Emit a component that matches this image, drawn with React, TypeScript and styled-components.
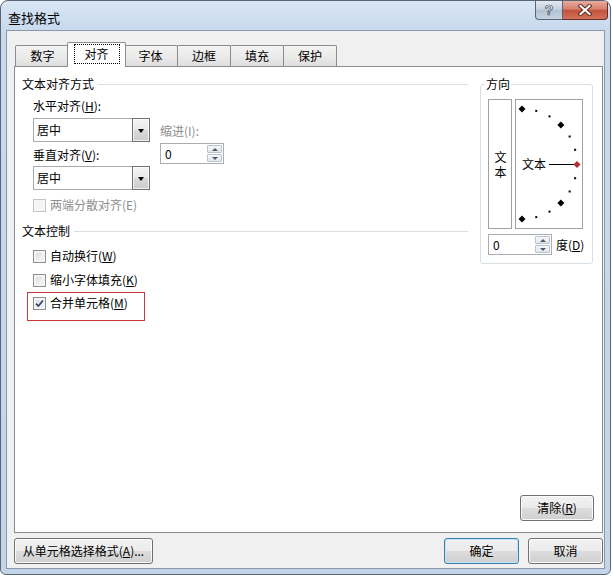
import React from 'react';
import styled, { createGlobalStyle } from 'styled-components';

const Global = createGlobalStyle`
  html, body { margin: 0; padding: 0; background: #ffffff; }
  body {
    font-family: "Noto Sans CJK SC", "Microsoft YaHei", sans-serif;
    font-size: 12px;
    color: #000;
  }
`;

const Window = styled.div`
  box-sizing: border-box;
  width: 611px;
  height: 575px;
  border: 1px solid #5a6573;
  border-radius: 8px 8px 6px 6px;
  background: linear-gradient(180deg, #d9e6f5 0px, #c9daee 28px, #c4d5e9 100%);
  display: flex;
  flex-direction: column;
  overflow: hidden;
`;

const TitleBar = styled.div`
  height: 29px;
  flex: none;
  display: flex;
  align-items: flex-start;
  justify-content: space-between;
  padding: 0 2px 0 7px;
`;

const Title = styled.div`
  margin-top: 9px;
  font-size: 13px;
  line-height: 16px;
`;

const Captions = styled.div`
  display: flex;
  height: 19px;
`;

const HelpButton = styled.div`
  box-sizing: border-box;
  width: 28px;
  height: 19px;
  border: 1px solid #56667a;
  border-top: none;
  border-radius: 0 0 0 4px;
  background: linear-gradient(180deg, #e2e9f1 0%, #c3cfdd 50%, #b0bfd0 51%, #c9d5e2 100%);
  display: flex;
  align-items: center;
  justify-content: center;
  font-family: "Liberation Sans", sans-serif;
  font-weight: bold;
  font-size: 14px;
  color: #f4f6f9;
  -webkit-text-stroke: 0.7px #3f4d60;
`;

const CloseButton = styled.div`
  box-sizing: border-box;
  width: 45px;
  height: 19px;
  border: 1px solid #6b2a22;
  border-left: none;
  border-top: none;
  border-radius: 0 0 4px 0;
  background: linear-gradient(180deg, #e9ab9f 0%, #d7806c 45%, #c5523c 52%, #d0745a 100%);
  display: flex;
  align-items: center;
  justify-content: center;
`;

const Client = styled.div`
  flex: 1;
  min-height: 0;
  margin: 0 5px 5px 5px;
  border: 1px solid #8a98aa;
  background: #f0f0f0;
  display: flex;
  flex-direction: column;
  padding: 11px 1px 4px 7px;
`;

const TabStrip = styled.div`
  height: 24px;
  flex: none;
  display: flex;
  align-items: flex-end;
  padding-left: 2px;
`;

const Tab = styled.div<{ $active?: boolean; $w: number }>`
  box-sizing: border-box;
  position: relative;
  width: ${(p) => (p.$active ? p.$w + 4 : p.$w)}px;
  height: ${(p) => (p.$active ? 25 : 21)}px;
  margin: 0 ${(p) => (p.$active ? -2 : 0)}px ${(p) => (p.$active ? -1 : 0)}px
    ${(p) => (p.$active ? -3 : -1)}px;
  z-index: ${(p) => (p.$active ? 2 : 1)};
  border: 1px solid #898c95;
  border-bottom: none;
  border-radius: 2px 2px 0 0;
  background: ${(p) =>
    p.$active ? '#ffffff' : 'linear-gradient(180deg, #f3f3f3 0%, #ebebeb 50%, #dedede 100%)'};
  display: flex;
  align-items: center;
  justify-content: center;
  padding-bottom: ${(p) => (p.$active ? 2 : 0)}px;
  line-height: 16px;
`;

const FocusRect = styled.span`
  box-sizing: border-box;
  width: 46px;
  height: 20px;
  border: 1px dotted #000;
  display: flex;
  align-items: center;
  justify-content: center;
`;

const Panel = styled.div`
  flex: 1;
  min-height: 0;
  border: 1px solid #898c95;
  background: #ffffff;
  display: flex;
  flex-direction: column;
  padding: 9px 8px 11px 7px;
`;

const PanelBody = styled.div`
  display: flex;
  align-items: flex-start;
`;

const LeftColumn = styled.div`
  width: 446px;
  display: flex;
  flex-direction: column;
`;

const GroupHeader = styled.div<{ $mt?: number }>`
  display: flex;
  align-items: center;
  line-height: 16px;
  margin-top: ${(p) => p.$mt ?? 0}px;
`;

const Rule = styled.span`
  flex: 1;
  height: 1px;
  margin-left: 4px;
  background: #d5dfe5;
`;

const Indented = styled.div`
  display: flex;
  flex-direction: column;
  align-items: flex-start;
  padding-left: 11px;
`;

const FieldLabel = styled.div<{ $mt?: number; $disabled?: boolean }>`
  line-height: 16px;
  margin-top: ${(p) => p.$mt ?? 0}px;
  color: ${(p) => (p.$disabled ? '#8d8d8d' : '#000')};
`;

const Acc = styled.span`
  text-decoration: underline;
  text-underline-offset: 1px;
`;

const AlignRow = styled.div`
  display: flex;
  align-items: flex-start;
  margin-top: 4px;
`;

const Col = styled.div`
  display: flex;
  flex-direction: column;
  align-items: flex-start;
`;

const IndentCol = styled(Col)`
  margin-left: 10px;
  padding-top: 5px;
`;

const SelectBox = styled.div<{ $mt?: number }>`
  box-sizing: border-box;
  width: 117px;
  height: 24px;
  margin-top: ${(p) => p.$mt ?? 0}px;
  border: 1px solid #a9abb0;
  background: #fff;
  display: flex;
  align-items: stretch;
`;

const SelectText = styled.span`
  flex: 1;
  padding-left: 3px;
  line-height: 22px;
`;

const SelectArrow = styled.span`
  box-sizing: border-box;
  width: 18px;
  margin: -1px -1px -1px 0;
  border: 1px solid #707070;
  background: linear-gradient(180deg, #f4f4f4 0%, #e9e9e9 50%, #d9d9d9 51%, #cdcdcd 100%);
  box-shadow: inset 0 0 0 1px rgba(255, 255, 255, 0.7);
  display: flex;
  align-items: center;
  justify-content: center;
`;

const DownTri = styled.span`
  width: 0;
  height: 0;
  border-left: 3.5px solid transparent;
  border-right: 3.5px solid transparent;
  border-top: 4px solid #000;
  margin-top: 1px;
`;

const SpinBox = styled.div<{ $mt?: number }>`
  box-sizing: border-box;
  width: 64px;
  height: 21px;
  margin-top: ${(p) => p.$mt ?? 0}px;
  border: 1px solid #abadb3;
  background: #fff;
  display: flex;
  align-items: center;
  padding-left: 4px;
  padding-right: 1px;
`;

const SpinText = styled.span`
  flex: 1;
  line-height: 16px;
`;

const SpinButtons = styled.div`
  width: 15px;
  height: 17px;
  display: flex;
  flex-direction: column;
  gap: 1px;
`;

const SpinBtn = styled.span`
  box-sizing: border-box;
  flex: 1;
  border: 1px solid #b9c3cf;
  border-radius: 1px;
  background: linear-gradient(180deg, #f5f7f9 0%, #e1e7ee 100%);
  display: flex;
  align-items: center;
  justify-content: center;
`;

const Tri = styled.span<{ $up?: boolean }>`
  width: 0;
  height: 0;
  border-left: 3px solid transparent;
  border-right: 3px solid transparent;
  ${(p) => (p.$up ? 'border-bottom: 3px solid #4e5b6b;' : 'border-top: 3px solid #4e5b6b;')}
`;

const CheckRow = styled.div<{ $mt?: number; $disabled?: boolean }>`
  display: flex;
  align-items: center;
  gap: 4px;
  line-height: 16px;
  margin-top: ${(p) => p.$mt ?? 0}px;
  color: ${(p) => (p.$disabled ? '#8d8d8d' : '#000')};
`;

const CheckBox = styled.span<{ $disabled?: boolean }>`
  box-sizing: border-box;
  width: 13px;
  height: 13px;
  border: 1px solid ${(p) => (p.$disabled ? '#c5c5c5' : '#8e8f8f')};
  background: ${(p) =>
    p.$disabled ? '#f4f4f4' : 'linear-gradient(135deg, #d0d4da 0%, #eceef0 60%, #f7f7f7 100%)'};
  box-shadow: inset 0 0 0 2px ${(p) => (p.$disabled ? '#f7f7f7' : '#f4f4f4')};
  display: flex;
  align-items: center;
  justify-content: center;
`;

const Highlight = styled.div`
  box-sizing: border-box;
  width: 118px;
  margin: 4px 0 0 -6px;
  border: 1px solid #c8383a;
  padding: 2px 0 9px 5px;
`;

const OrientGroup = styled.fieldset`
  box-sizing: border-box;
  width: 113px;
  min-width: 0;
  margin: 0 0 0 12px;
  padding: 0 0 8px 4px;
  border: 1px solid #d5dfe5;
  border-radius: 3px;
`;

const OrientLegend = styled.legend`
  padding: 0 1px;
  line-height: 16px;
`;

const OrientRow = styled.div`
  display: flex;
  gap: 3px;
  margin: 7px 0 0 3px;
`;

const VerticalBox = styled.div`
  box-sizing: border-box;
  width: 24px;
  height: 130px;
  border: 1px solid #a0a0a0;
  display: flex;
  align-items: center;
  justify-content: center;
`;

const VerticalText = styled.span`
  writing-mode: vertical-rl;
  text-orientation: upright;
  letter-spacing: 3px;
  line-height: 16px;
  margin-top: 3px;
`;

const DialBox = styled.div`
  box-sizing: border-box;
  width: 68px;
  height: 130px;
  border: 1px solid #a0a0a0;
  display: flex;
`;

const DegreeRow = styled.div`
  display: flex;
  align-items: center;
  gap: 4px;
  margin: 5px 0 0 3px;
  line-height: 16px;
`;

const ClearButtonRow = styled.div`
  margin-top: auto;
  display: flex;
  justify-content: flex-end;
`;

const BottomBar = styled.div`
  flex: none;
  display: flex;
  margin-top: 5px;
  gap: 9px;
`;

const Spacer = styled.div`
  flex: 1;
`;

const Button = styled.button<{ $w: number; $default?: boolean }>`
  box-sizing: border-box;
  width: ${(p) => p.$w}px;
  height: 26px;
  padding: 0;
  border: 1px solid ${(p) => (p.$default ? '#3c7fb1' : '#707070')};
  border-radius: 3px;
  background: linear-gradient(180deg, #f2f2f2 0%, #ebebeb 48%, #dddddd 50%, #cfcfcf 100%);
  box-shadow: inset 0 0 0 1px ${(p) => (p.$default ? '#bfe3f7' : 'rgba(255,255,255,0.85)')};
  font-family: inherit;
  font-size: 12px;
  line-height: 16px;
  color: #000;
`;

const Check = () => (
  <svg width="9" height="9" viewBox="0 0 9 9">
    <path d="M1 4.6 L3.4 7 L8 1.6" fill="none" stroke="#2a4466" strokeWidth="1.6" />
  </svg>
);

const Spinner = ({ mt }: { mt?: number }) => (
  <SpinBox $mt={mt}>
    <SpinText>0</SpinText>
    <SpinButtons>
      <SpinBtn>
        <Tri $up />
      </SpinBtn>
      <SpinBtn>
        <Tri />
      </SpinBtn>
    </SpinButtons>
  </SpinBox>
);

const Select = ({ mt }: { mt?: number }) => (
  <SelectBox $mt={mt}>
    <SelectText>居中</SelectText>
    <SelectArrow>
      <DownTri />
    </SelectArrow>
  </SelectBox>
);

const Diamond = ({ x, y, color = '#000' }: { x: number; y: number; color?: string }) => (
  <path d={`M${x} ${y - 3.5} L${x + 3.5} ${y} L${x} ${y + 3.5} L${x - 3.5} ${y} Z`} fill={color} />
);

const Dial = () => {
  const cx = 6;
  const cy = 64;
  const r = 55;
  const items: React.ReactNode[] = [];
  for (let a = 0; a <= 180; a += 15) {
    const rad = (a * Math.PI) / 180;
    const x = cx + r * Math.sin(rad);
    const y = cy - r * Math.cos(rad);
    if (a === 90) continue;
    if (a % 45 === 0) items.push(<Diamond key={a} x={x} y={y} />);
    else items.push(<rect key={a} x={x - 1} y={y - 1} width="2" height="2" fill="#000" />);
  }
  return (
    <svg width="66" height="128" viewBox="0 0 66 128">
      {items}
      <text x="6" y="69" fontSize="12" fontFamily='"Noto Sans CJK SC", sans-serif' fill="#000">
        文本
      </text>
      <line x1="33" y1="64.5" x2="58" y2="64.5" stroke="#000" strokeWidth="1" />
      <Diamond x={61} y={64.5} color="#b03030" />
    </svg>
  );
};

const tabs = [
  { label: '数字', w: 55 },
  { label: '对齐', w: 55, active: true },
  { label: '字体', w: 55 },
  { label: '边框', w: 54 },
  { label: '填充', w: 54 },
  { label: '保护', w: 54 },
];

export default function App() {
  return (
    <>
      <Global />
      <Window>
        <TitleBar>
          <Title>查找格式</Title>
          <Captions>
            <HelpButton>?</HelpButton>
            <CloseButton>
              <svg width="14" height="12" viewBox="0 0 14 12">
                <path d="M2.5 2 L11.5 10 M11.5 2 L2.5 10" stroke="#5c2019" strokeWidth="4" strokeLinecap="square" />
                <path d="M2.5 2 L11.5 10 M11.5 2 L2.5 10" stroke="#ffffff" strokeWidth="2.2" strokeLinecap="square" />
              </svg>
            </CloseButton>
          </Captions>
        </TitleBar>
        <Client>
          <TabStrip>
            {tabs.map((t) => (
              <Tab key={t.label} $w={t.w} $active={t.active}>
                {t.active ? <FocusRect>{t.label}</FocusRect> : t.label}
              </Tab>
            ))}
          </TabStrip>
          <Panel>
            <PanelBody>
              <LeftColumn>
                <GroupHeader>
                  <span>文本对齐方式</span>
                  <Rule />
                </GroupHeader>
                <Indented>
                  <FieldLabel $mt={6}>
                    水平对齐(<Acc>H</Acc>):
                  </FieldLabel>
                  <AlignRow>
                    <Col>
                      <Select />
                      <FieldLabel $mt={5}>
                        垂直对齐(<Acc>V</Acc>):
                      </FieldLabel>
                      <Select mt={3} />
                    </Col>
                    <IndentCol>
                      <FieldLabel $disabled>缩进(I):</FieldLabel>
                      <Spinner mt={4} />
                    </IndentCol>
                  </AlignRow>
                  <CheckRow $mt={7} $disabled>
                    <CheckBox $disabled />
                    <span>两端分散对齐(E)</span>
                  </CheckRow>
                </Indented>
                <GroupHeader $mt={10}>
                  <span>文本控制</span>
                  <Rule />
                </GroupHeader>
                <Indented>
                  <CheckRow $mt={9}>
                    <CheckBox />
                    <span>
                      自动换行(<Acc>W</Acc>)
                    </span>
                  </CheckRow>
                  <CheckRow $mt={8}>
                    <CheckBox />
                    <span>
                      缩小字体填充(<Acc>K</Acc>)
                    </span>
                  </CheckRow>
                  <Highlight>
                    <CheckRow>
                      <CheckBox>
                        <Check />
                      </CheckBox>
                      <span>
                        合并单元格(<Acc>M</Acc>)
                      </span>
                    </CheckRow>
                  </Highlight>
                </Indented>
              </LeftColumn>
              <OrientGroup>
                <OrientLegend>方向</OrientLegend>
                <OrientRow>
                  <VerticalBox>
                    <VerticalText>文本</VerticalText>
                  </VerticalBox>
                  <DialBox>
                    <Dial />
                  </DialBox>
                </OrientRow>
                <DegreeRow>
                  <Spinner />
                  <span>
                    度(<Acc>D</Acc>)
                  </span>
                </DegreeRow>
              </OrientGroup>
            </PanelBody>
            <ClearButtonRow>
              <Button $w={74}>
                清除(<Acc>R</Acc>)
              </Button>
            </ClearButtonRow>
          </Panel>
          <BottomBar>
            <Button $w={139}>
              从单元格选择格式(<Acc>A</Acc>)...
            </Button>
            <Spacer />
            <Button $w={75} $default>
              确定
            </Button>
            <Button $w={75}>取消</Button>
          </BottomBar>
        </Client>
      </Window>
    </>
  );
}
